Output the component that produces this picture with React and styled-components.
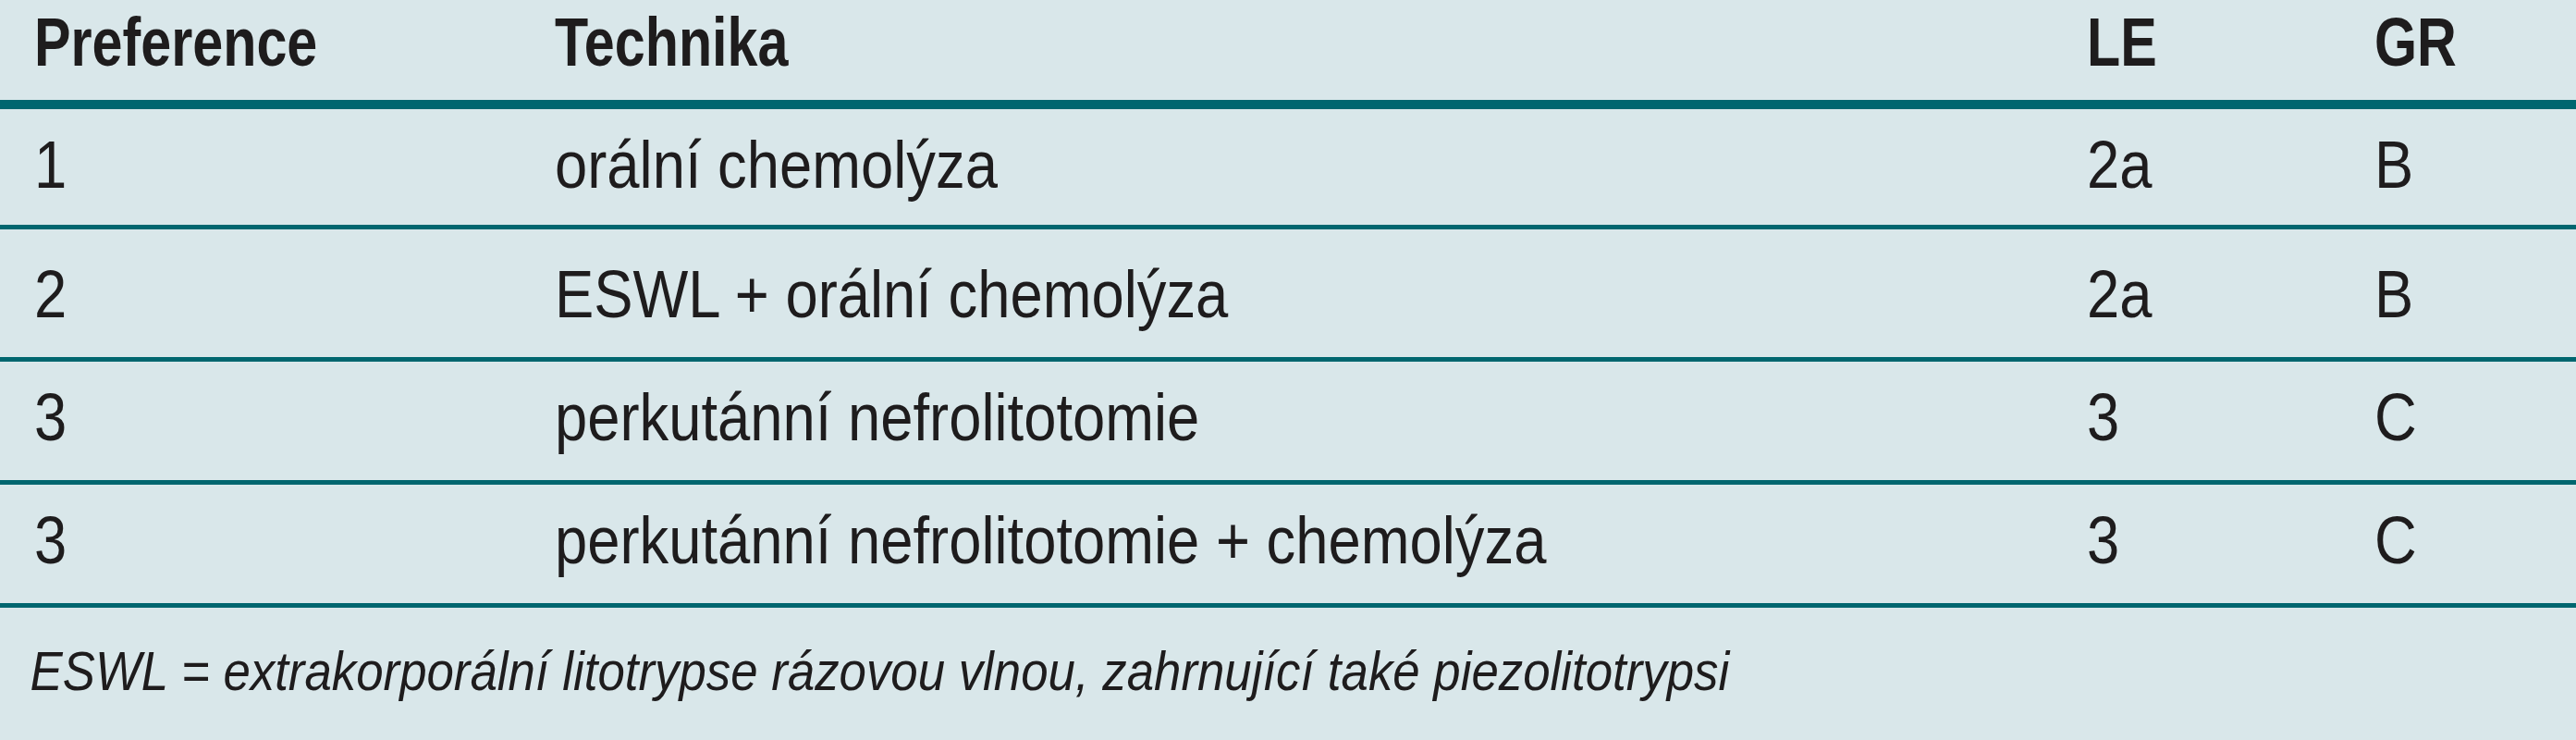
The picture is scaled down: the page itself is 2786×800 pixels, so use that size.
import React from 'react';
import styled, { createGlobalStyle } from 'styled-components';

const GlobalStyle = createGlobalStyle`
  html, body {
    margin: 0;
    padding: 0;
    background: #d9e7ea;
  }
`;

const Table = styled.div`
  width: 2786px;
  height: 800px;
  background: #d9e7ea;
  color: #1e1c1d;
  font-family: "Liberation Sans", Arial, sans-serif;
  display: flex;
  flex-direction: column;
  overflow: hidden;
`;

// rows have slightly uneven heights in the source, so padding comes in as props
const Row = styled.div`
  display: grid;
  grid-template-columns: 563px 1657px 311px 1fr;
  padding: ${p => p.$top}px 0 ${p => p.$bottom}px 37px;
  border-bottom: ${p => p.$line}px solid #00666f;
  font-size: ${p => (p.$head ? 75 : 72)}px;
  line-height: ${p => (p.$head ? 75 : 72)}px;
  font-weight: ${p => (p.$head ? 700 : 400)};
  white-space: nowrap;
`;

// the printed face is a condensed grotesk, squeeze Liberation Sans to match
const Cell = styled.div`
  transform: scaleX(${p => (p.$head ? 0.79 : 0.88)});
  transform-origin: left center;
`;

const Note = styled.div`
  padding: 39px 0 0 37px;
  font-size: 60px;
  line-height: 60px;
  font-style: italic;
  white-space: nowrap;
  transform: scaleX(0.88);
  transform-origin: left center;
`;

const rows = [
  { pref: '1', tech: 'orální chemolýza', le: '2a', gr: 'B', top: 24, bottom: 29 },
  { pref: '2', tech: 'ESWL + orální chemolýza', le: '2a', gr: 'B', top: 34, bottom: 32 },
  { pref: '3', tech: 'perkutánní nefrolitotomie', le: '3', gr: 'C', top: 24, bottom: 32 },
  { pref: '3', tech: 'perkutánní nefrolitotomie + chemolýza', le: '3', gr: 'C', top: 24, bottom: 32 },
];

export default function App() {
  return (
    <>
      <GlobalStyle />
      <Table>
        <Row $head $top={8} $bottom={25} $line={10}>
          <Cell $head>Preference</Cell>
          <Cell $head>Technika</Cell>
          <Cell $head>LE</Cell>
          <Cell $head>GR</Cell>
        </Row>
        {rows.map((r, i) => (
          <Row key={i} $top={r.top} $bottom={r.bottom} $line={5}>
            <Cell>{r.pref}</Cell>
            <Cell>{r.tech}</Cell>
            <Cell>{r.le}</Cell>
            <Cell>{r.gr}</Cell>
          </Row>
        ))}
        <Note>ESWL = extrakorporální litotrypse rázovou vlnou, zahrnující také piezolitotrypsi</Note>
      </Table>
    </>
  );
}
